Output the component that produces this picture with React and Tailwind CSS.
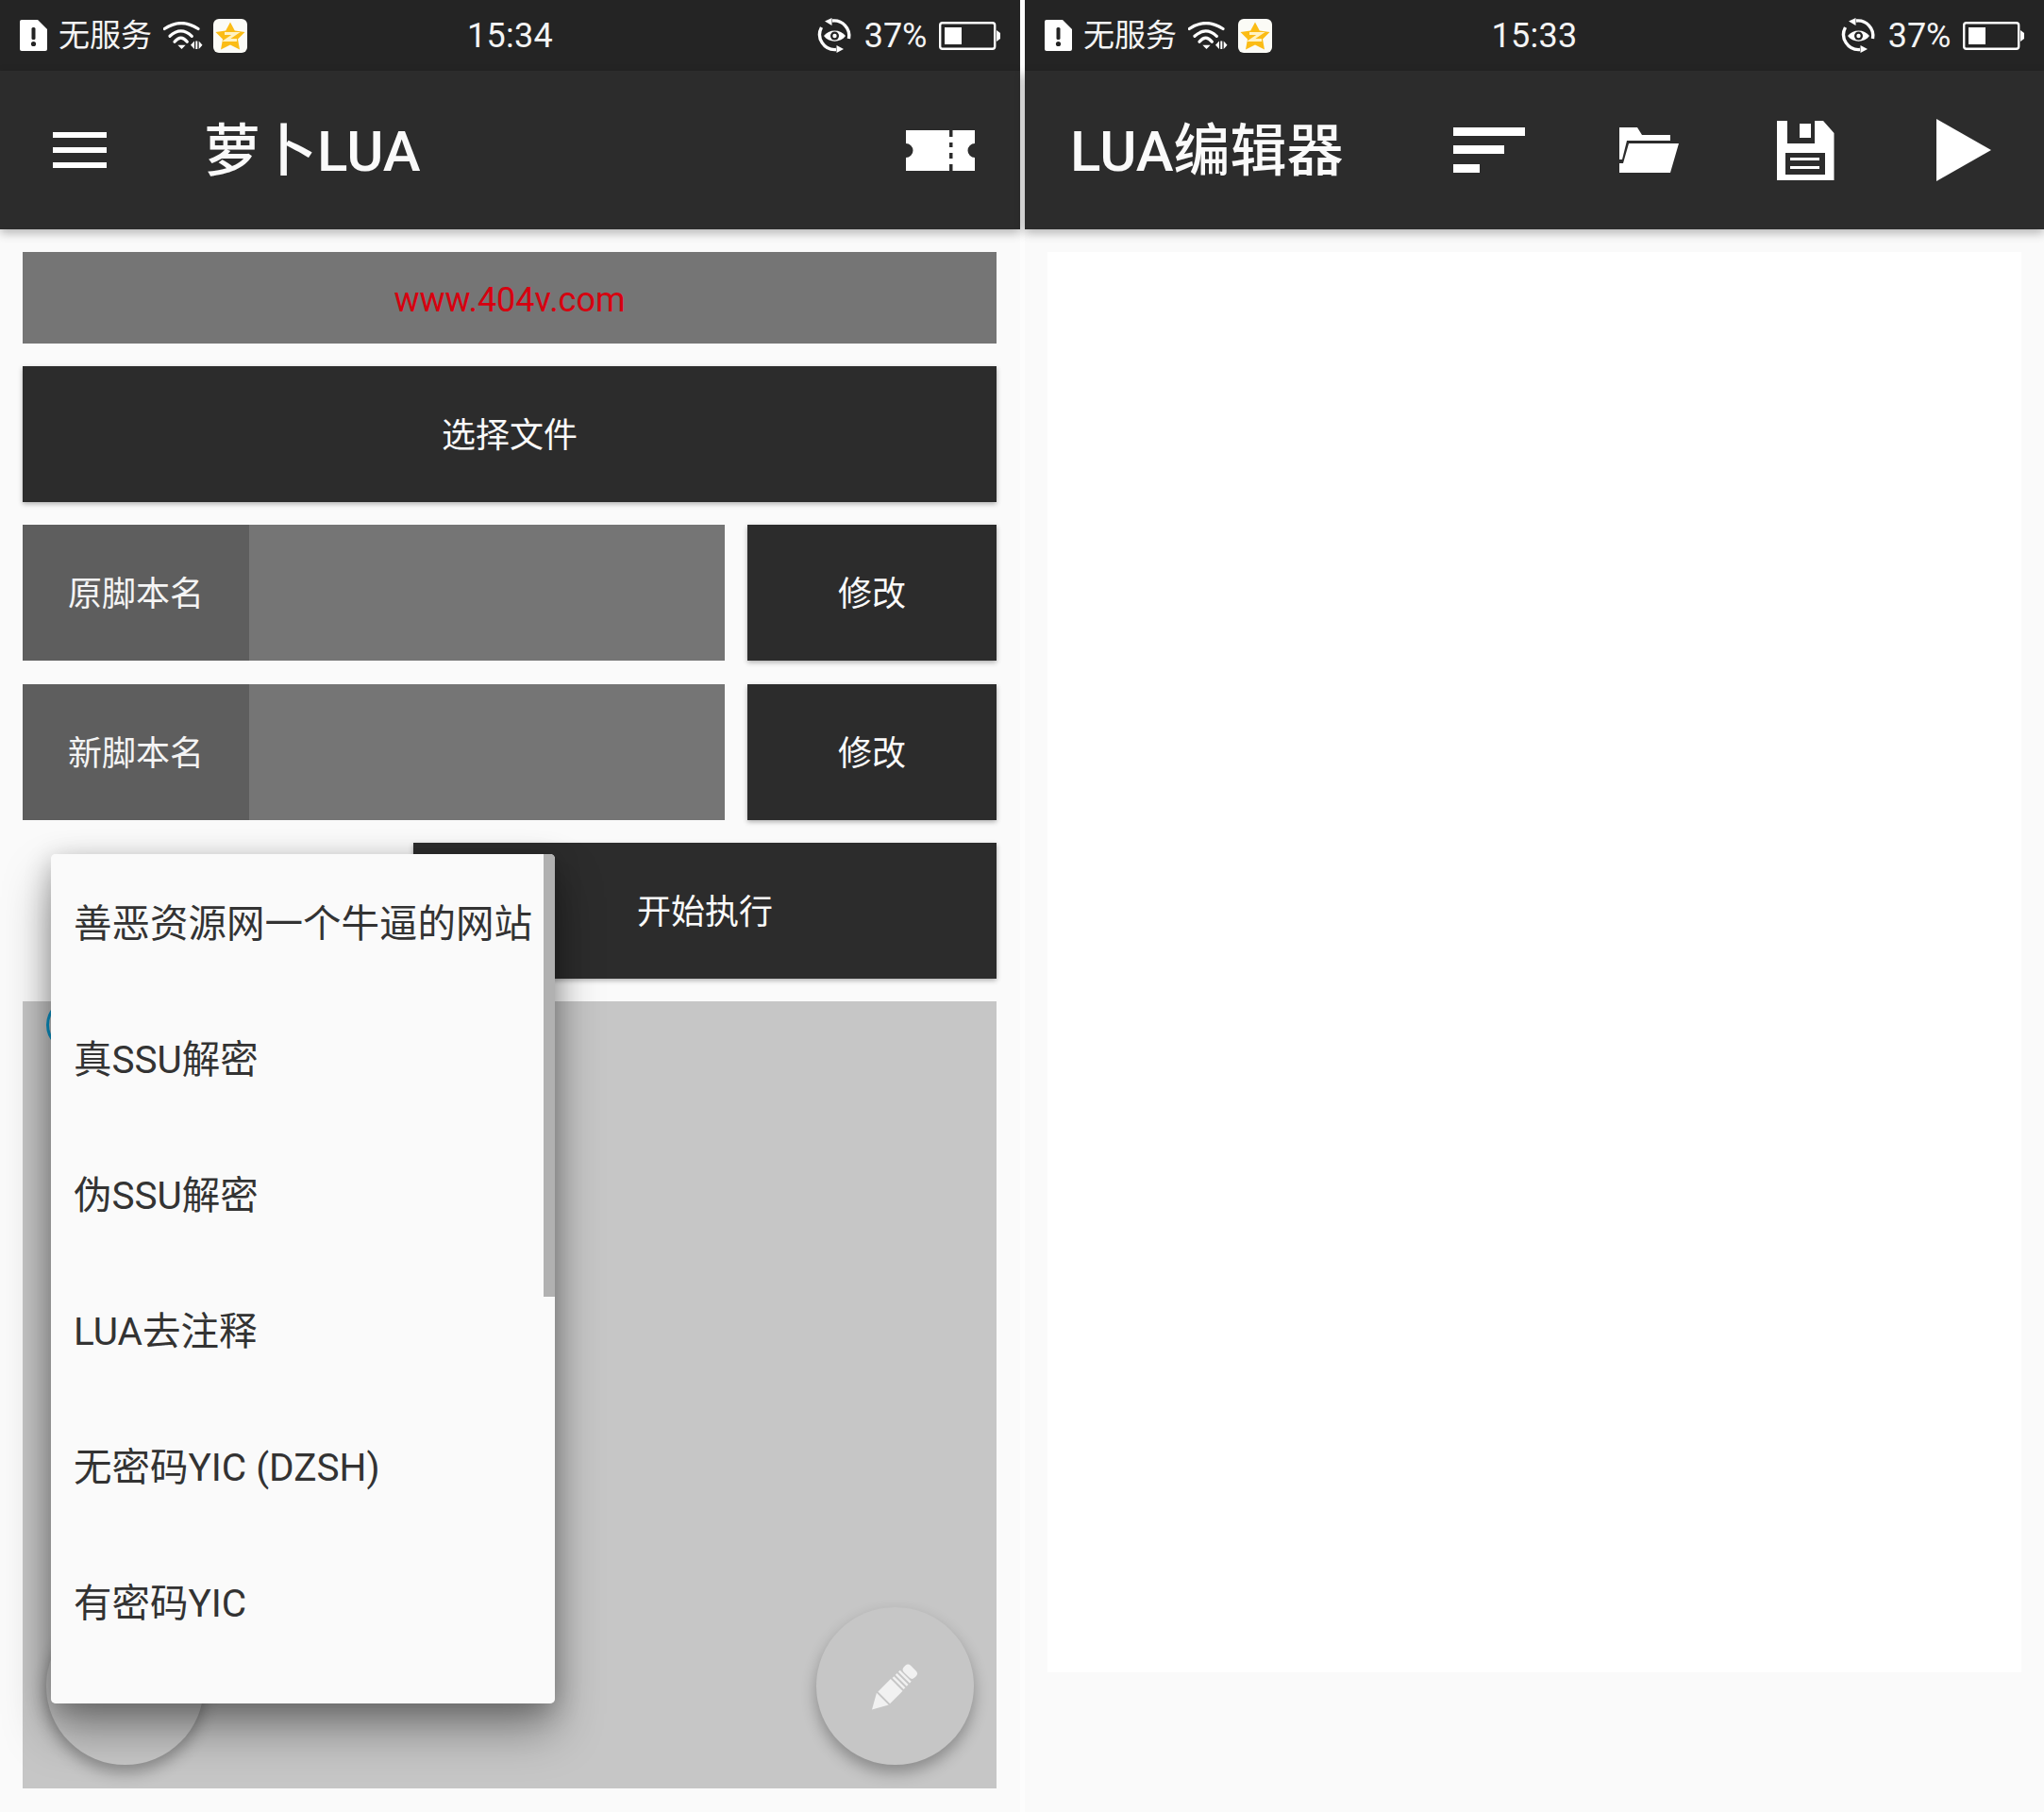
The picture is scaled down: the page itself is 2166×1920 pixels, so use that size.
import React from "react";

function SimIcon() {
  return (
    <svg width="29" height="33" viewBox="0 0 29 33">
      <path d="M2 0H19L29 10V31a2 2 0 0 1-2 2H2a2 2 0 0 1-2-2V2a2 2 0 0 1 2-2Z" fill="#fff" />
      <rect x="12.5" y="8" width="4" height="13" rx="1.5" fill="#242424" />
      <circle cx="14.5" cy="25.5" r="2.6" fill="#242424" />
    </svg>
  );
}

function WifiIcon() {
  return (
    <svg width="42" height="30" viewBox="0 0 42 30" fill="none">
      <path d="M1.300 7.500Q19 -4.500 37 7.500" stroke="#fff" strokeWidth="3.200" strokeLinecap="round" />
      <path d="M7 15.300Q18.700 4.500 30.300 15.300" stroke="#fff" strokeWidth="3.200" strokeLinecap="round" />
      <path d="M12 21.300Q18.700 13 25.300 21.300" stroke="#fff" strokeWidth="3.200" strokeLinecap="round" />
      <path d="M15.300 24.700H23.700L19.500 29Z" fill="#fff" />
      <path d="M33 20.500V29L29 24.700Z" fill="#fff" />
      <rect x="34.300" y="20.500" width="2" height="8.500" fill="#fff" />
      <path d="M37.700 20.500V29L41.500 24.700Z" fill="#fff" />
    </svg>
  );
}

function QzoneIcon() {
  return (
    <svg width="36" height="36" viewBox="0 0 36 36">
      <rect width="36" height="36" rx="6" fill="#fbfbf6" />
      <path d="M18 3.500L22.800 12.500L33.500 14L26 21.500L28 32.500L18 27.500L8 32.500L10 21.500L2.500 14L13.200 12.500Z" fill="#fbbc15" />
      <path d="M12 15.500H24L13.500 22.500H25" stroke="#fff3c4" strokeWidth="2.800" fill="none" />
    </svg>
  );
}

function EyeSyncIcon() {
  return (
    <svg width="37" height="37" viewBox="0 0 37 37" fill="none">
      <path d="M16 3A16 16 0 0 1 33.500 22" stroke="#fff" strokeWidth="3.400" />
      <path d="M20 33.500A16 16 0 0 1 4.500 10" stroke="#fff" strokeWidth="3.400" />
      <path d="M8 3.500L15.500 0V8Z" fill="#fff" />
      <path d="M28 33L20.500 29V37Z" fill="#fff" />
      <path d="M7 19C12 11.500 25 11.500 30 19C25 26.500 12 26.500 7 19Z" fill="#fff" />
      <circle cx="18.500" cy="19" r="4.500" fill="#242424" />
      <circle cx="18.500" cy="19" r="2.200" fill="#fff" />
    </svg>
  );
}

function BatteryIcon() {
  return (
    <svg width="65" height="30" viewBox="0 0 65 30" fill="none">
      <rect x="1.2" y="1.2" width="58" height="27.6" rx="2.500" stroke="#fff" strokeWidth="2.400" />
      <rect x="6" y="6" width="18" height="18" fill="#fff" />
      <path d="M61 9L65 12V18L61 21Z" fill="#fff" />
    </svg>
  );
}

function StatusBar({ time }) {
  return (
    <div className="h-[75px] bg-[#242424] grid grid-cols-3 items-center text-[#f4f4f4]">
      <div className="flex items-center pl-[21px]">
        <SimIcon />
        <span className="ml-[12px] text-[33px] leading-none">无服务</span>
        <span className="ml-[12px] flex"><WifiIcon /></span>
        <span className="ml-[11px] flex"><QzoneIcon /></span>
      </div>
      <div className="text-center text-[36px] leading-none tracking-[0.3px] pt-[1px]">{time}</div>
      <div className="flex items-center justify-end pr-[21.500px]">
        <EyeSyncIcon />
        <span className="ml-[13px] text-[36px] leading-none pt-[1px]">37%</span>
        <span className="ml-[12px] flex"><BatteryIcon /></span>
      </div>
    </div>
  );
}

function TicketIcon() {
  return (
    <svg width="73" height="43" viewBox="0 0 73 43">
      <path
        fillRule="evenodd"
        d="M0 0H73V14A7.500 7.500 0 0 0 73 29V43H0V29A7.500 7.500 0 0 0 0 14Z M46 0H49.500V7H46Z M46 13H49.500V18H46Z M46 24H49.500V30H46Z M46 36H49.500V43H46Z"
        fill="#fff"
      />
    </svg>
  );
}

function SortIcon() {
  return (
    <svg width="76" height="48" viewBox="0 0 76 48" fill="#fff">
      <rect width="76" height="9" />
      <rect y="19" width="54" height="9" />
      <rect y="39" width="28" height="9" />
    </svg>
  );
}

function FolderIcon() {
  return (
    <svg width="63" height="48" viewBox="0 0 63 48" fill="#fff">
      <path d="M0 0H19L24 8H54V14H8L3 34H0Z" />
      <path d="M10 17H63L54 48H0V38H4Z" />
    </svg>
  );
}

function SaveIcon() {
  return (
    <svg width="61" height="63" viewBox="0 0 61 63">
      <path
        fillRule="evenodd"
        fill="#fff"
        d="M0 0H11V24H40V0H49L60.500 13V63H0Z M9 34V57H51V34Z M14 39H45V42H14Z M14 48H45V51H14Z"
      />
      <rect x="24" y="3" width="12" height="15" fill="#fff" />
    </svg>
  );
}

function PlayIcon() {
  return (
    <svg width="58" height="66" viewBox="0 0 58 66">
      <path d="M0 0L58 33L0 66Z" fill="#fff" />
    </svg>
  );
}

function AppBar({ children, className }) {
  return (
    <div className={"relative z-10 h-[168px] bg-[#2c2c2c] flex items-center shadow-[0_4px_10px_rgba(0,0,0,0.28)] text-[#fafafa] " + className}>
      {children}
    </div>
  );
}

function DarkButton({ children, className }) {
  return (
    <div className={"h-[144px] pt-[4px] bg-[#2c2c2c] text-[#fafafa] text-[36px] flex items-center justify-center shadow-[0_2px_5px_rgba(0,0,0,0.3)] " + className}>
      {children}
    </div>
  );
}

function NameRow({ label }) {
  return (
    <div className="flex justify-between">
      <div className="w-[744px] h-[144px] bg-[#757575] flex">
        <div className="w-[240px] pt-[4px] bg-[#5e5e5e] text-[#f4f4f4] text-[36px] flex items-center justify-center">{label}</div>
      </div>
      <DarkButton className="w-[264px]">修改</DarkButton>
    </div>
  );
}

const menuItems = ["善恶资源网一个牛逼的网站", "真SSU解密", "伪SSU解密", "LUA去注释", "无密码YIC (DZSH)", "有密码YIC"];

function PencilIcon() {
  return (
    <svg width="50" height="50" viewBox="0 0 50 50" fill="#f1f1f1">
      <g transform="translate(0 49.500) rotate(-45)">
        <path d="M0 0L16 -9V9Z" />
        <rect x="18" y="-9" width="19" height="18" />
        <rect x="39" y="-8.500" width="2.500" height="17" />
        <rect x="43.500" y="-8.500" width="2.500" height="17" />
        <rect x="48" y="-8.500" width="2.500" height="17" />
        <rect x="52" y="-8" width="10" height="16" rx="4" />
      </g>
    </svg>
  );
}

function LeftPanel() {
  return (
    <div className="relative w-[1081px] h-[1920px] bg-[#fafafa]">
      <StatusBar time="15:34" />
      <AppBar className="pl-[56px] pr-[48px]">
        <div className="w-[57px] flex flex-col gap-[9.500px]">
          <div className="h-[6.500px] bg-white" />
          <div className="h-[6.500px] bg-white" />
          <div className="h-[6.500px] bg-white" />
        </div>
        <div className="ml-[103px] pt-[3px] text-[60px] font-medium leading-none">萝卜LUA</div>
        <div className="ml-auto flex"><TicketIcon /></div>
      </AppBar>
      <div className="pl-6 pr-[25px] pt-6 flex flex-col gap-[24.400px]">
        <div className="h-[96.500px] pt-[5px] bg-[#757575] text-[#d7000f] text-[36px] flex items-center justify-center">www.404v.com</div>
        <DarkButton>选择文件</DarkButton>
        <NameRow label="原脚本名" />
        <NameRow label="新脚本名" />
        <div className="flex justify-end">
          <DarkButton className="w-[618px]">开始执行</DarkButton>
        </div>
        <div className="relative h-[834px] bg-[#c6c6c6]">
          <div className="absolute left-[25px] top-[-3px] w-[56px] h-[56px] rounded-full border-[3px] border-[#0b95c9]" />
          <div className="absolute left-[25px] bottom-[25px] w-[167px] h-[167px] rounded-full bg-[#c6c6c6] shadow-[0_8px_16px_rgba(0,0,0,0.3)]" />
          <div className="absolute right-[24px] bottom-[25px] w-[167px] h-[167px] rounded-full bg-[#c6c6c6] shadow-[0_8px_16px_rgba(0,0,0,0.3)] flex items-center justify-center">
            <PencilIcon />
          </div>
        </div>
      </div>
      <div className="absolute z-20 left-[54px] top-[905px] w-[534px] h-[900px] rounded-[5px] bg-[#fafafa] overflow-hidden">
        <div className="pt-[2.500px]">
          {menuItems.map((item) => (
            <div key={item} className="h-[144px] pl-[24px] flex items-center text-[40.500px] text-[#333333] whitespace-nowrap">
              {item}
            </div>
          ))}
        </div>
        <div className="absolute right-0 top-0 w-[12px] h-[469px] bg-[#b1b1b1]" />
      </div>
      <div className="absolute z-[15] left-[54px] top-[905px] w-[534px] h-[900px] rounded-[5px] shadow-[0_28px_50px_rgba(0,0,0,0.36),0_6px_28px_rgba(0,0,0,0.24)]" />
    </div>
  );
}

function RightPanel() {
  return (
    <div className="w-[1080px] h-[1920px] bg-[#fafafa]">
      <StatusBar time="15:33" />
      <AppBar className="pl-[48px]">
        <div className="w-[292px] pt-[3px] text-[60px] font-medium leading-none whitespace-nowrap">LUA编辑器</div>
        <div className="ml-[114px] flex"><SortIcon /></div>
        <div className="ml-[100px] flex"><FolderIcon /></div>
        <div className="ml-[104px] flex"><SaveIcon /></div>
        <div className="ml-[108px] flex"><PlayIcon /></div>
      </AppBar>
      <div className="mx-6 mt-6 h-[1505px] bg-white" />
    </div>
  );
}

export default function App() {
  return (
    <div className="w-[2166px] h-[1920px] flex bg-white overflow-hidden font-['Roboto','Noto_Sans_CJK_SC',sans-serif]">
      <LeftPanel />
      <div className="w-[5px] bg-[#fdfdfd]" />
      <RightPanel />
    </div>
  );
}
